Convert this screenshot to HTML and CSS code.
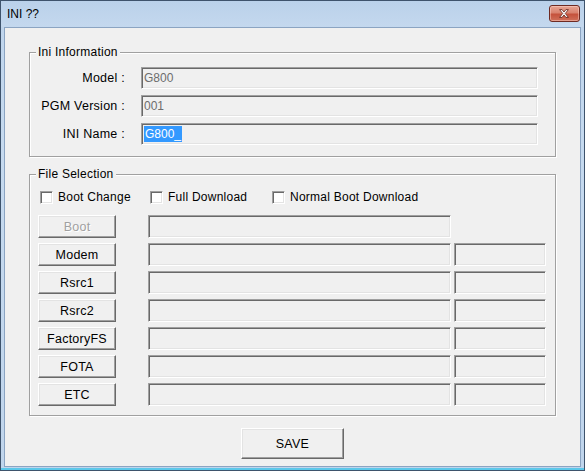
FILE: index.html
```html
<!DOCTYPE html>
<html>
<head>
<meta charset="utf-8">
<title>INI ??</title>
<link rel="stylesheet" href="styles.css">
</head>
<body>
<div class="window">
  <div class="titlebar">
    <span class="title">INI ??</span>
    <span class="close">
      <svg width="31" height="17" viewBox="0 0 31 17">
        <path d="M11 4.5 L13.5 4.5 L15.5 7 L17.5 4.5 L20 4.5 L16.8 8.5 L20 12.5 L17.5 12.5 L15.5 10 L13.5 12.5 L11 12.5 L14.2 8.5 Z" fill="#fff" stroke="#5a1d14" stroke-width="0.8" stroke-linejoin="round"/>
      </svg>
    </span>
  </div>
  <div class="client">
    <fieldset class="group info">
      <legend>Ini Information</legend>
      <div class="info-grid">
        <label class="lbl">Model :</label>
        <div class="edit disabled">G800</div>
        <label class="lbl">PGM Version :</label>
        <div class="edit disabled">001</div>
        <label class="lbl">INI Name :</label>
        <div class="edit"><span class="sel">G800_</span></div>
      </div>
    </fieldset>
    <fieldset class="group files">
      <legend>File Selection</legend>
      <div class="checks">
        <span class="check"><span class="box"></span>Boot Change</span>
        <span class="check"><span class="box"></span>Full Download</span>
        <span class="check"><span class="box"></span>Normal Boot Download</span>
      </div>
      <div class="file-grid">
        <div class="btn disabled-btn">Boot</div>
        <div class="edit"></div>
        <div class="empty"></div>
        <div class="btn">Modem</div>
        <div class="edit"></div>
        <div class="edit"></div>
        <div class="btn">Rsrc1</div>
        <div class="edit"></div>
        <div class="edit"></div>
        <div class="btn">Rsrc2</div>
        <div class="edit"></div>
        <div class="edit"></div>
        <div class="btn">FactoryFS</div>
        <div class="edit"></div>
        <div class="edit"></div>
        <div class="btn">FOTA</div>
        <div class="edit"></div>
        <div class="edit"></div>
        <div class="btn">ETC</div>
        <div class="edit"></div>
        <div class="edit"></div>
      </div>
    </fieldset>
    <div class="btn save">SAVE</div>
  </div>
</div>
</body>
</html>
```
FILE: styles.css
```css
html, body {
  margin: 0;
  padding: 0;
  background: #000;
}
body {
  font-family: "Liberation Sans", Arial, sans-serif;
  font-size: 12px;
  letter-spacing: 0.25px;
  color: #000;
}
.window {
  width: 585px;
  height: 471px;
  box-sizing: border-box;
  border: 1px solid #3e536c;
  background: linear-gradient(to bottom, #bed4ec 0%, #c6daef 30%, #c0d5ec 100%);
  padding: 0 3px 3px 3px;
  display: flex;
  flex-direction: column;
  box-shadow: inset 0 -2px 0 #5cc8ea;
}
.titlebar {
  height: 26px;
  margin: 0 -3px;
  padding: 0 4px 0 6px;
  display: flex;
  align-items: center;
  justify-content: space-between;
  background: linear-gradient(to bottom, #bad1ea, #c4d8ee);
}
.title {
  font-size: 12px;
  letter-spacing: 0;
  color: #000;
  line-height: 14px;
}
.close {
  align-self: flex-start;
  margin-top: 4px;
  width: 31px;
  height: 17px;
  box-sizing: border-box;
  border: 1px solid #6e2a22;
  border-radius: 3px;
  background: linear-gradient(to bottom, #e8a593 0%, #d9826e 45%, #c5523c 55%, #d0705a 100%);
  box-shadow: inset 0 0 0 1px rgba(255, 220, 210, 0.45);
  display: flex;
  overflow: hidden;
}
.close svg {
  margin: -1px 0 0 -1px;
}
.client {
  flex: 1;
  background: #f0f0f0;
  border: 1px solid #8ba4c2;
  display: flex;
  flex-direction: column;
}
.group {
  margin: 0 24px;
  padding: 0;
  min-width: 0;
  border: 1px solid #a0a0a0;
  box-shadow: 1px 1px 0 #fff, inset 1px 1px 0 #fff;
}
.group legend {
  margin-left: 6px;
  padding: 0 2px;
  line-height: 14px;
  font-size: 12px;
  background: #f0f0f0;
}
.info {
  margin-top: 17px;
  padding: 8px 0 11px 0;
}
.info-grid {
  display: grid;
  grid-template-columns: 95px 397px;
  column-gap: 16px;
  row-gap: 6px;
  align-items: center;
}
.lbl {
  justify-self: end;
  font-size: 12.5px;
}
.edit {
  height: 22px;
  box-sizing: border-box;
  border: 1px solid;
  border-color: #a0a0a0 #fff #fff #a0a0a0;
  box-shadow: inset 1px 1px 0 #696969, inset -1px -1px 0 #e3e3e3;
  background: #f0f0f0;
  padding: 2px 0 0 2px;
  line-height: 16px;
  font-size: 12px;
  letter-spacing: 0;
  white-space: nowrap;
  overflow: hidden;
}
.edit.disabled {
  color: #6d6d6d;
}
.sel {
  background: #3399ff;
  color: #fff;
  display: inline-block;
  padding: 0 1px;
}
.files {
  margin-top: 10px;
  padding: 9px 0 9px 0;
}
.checks {
  display: grid;
  grid-template-columns: 110px 122px auto;
  padding-left: 10px;
  height: 14px;
  align-items: center;
  margin-bottom: 11px;
}
.check {
  display: flex;
  align-items: center;
  line-height: 14px;
  white-space: nowrap;
}
.box {
  width: 13px;
  height: 13px;
  box-sizing: border-box;
  border: 1px solid;
  border-color: #a0a0a0 #fff #fff #a0a0a0;
  box-shadow: inset 1px 1px 0 #696969, inset -1px -1px 0 #e3e3e3;
  background: #fff;
  margin-right: 5px;
  flex: none;
}
.file-grid {
  display: grid;
  grid-template-columns: 78px 303px 92px;
  column-gap: 32px;
  row-gap: 5px;
  padding-left: 8px;
  align-items: center;
}
.file-grid .edit:nth-child(3n) {
  margin-left: -29px;
  width: 92px;
}
.file-grid .edit {
  height: 23px;
}
.btn {
  height: 23px;
  box-sizing: border-box;
  border: 1px solid;
  border-color: #fff #696969 #696969 #fff;
  box-shadow: inset -1px -1px 0 #a0a0a0, inset 1px 1px 0 #e3e3e3;
  background: #f0f0f0;
  display: flex;
  align-items: center;
  justify-content: center;
  font-size: 12.5px;
}
.disabled-btn {
  color: #a0a0a0;
  text-shadow: 1px 1px 0 #fff;
}
.save {
  align-self: center;
  margin-top: 12px;
  width: 103px;
  height: 31px;
}
```
